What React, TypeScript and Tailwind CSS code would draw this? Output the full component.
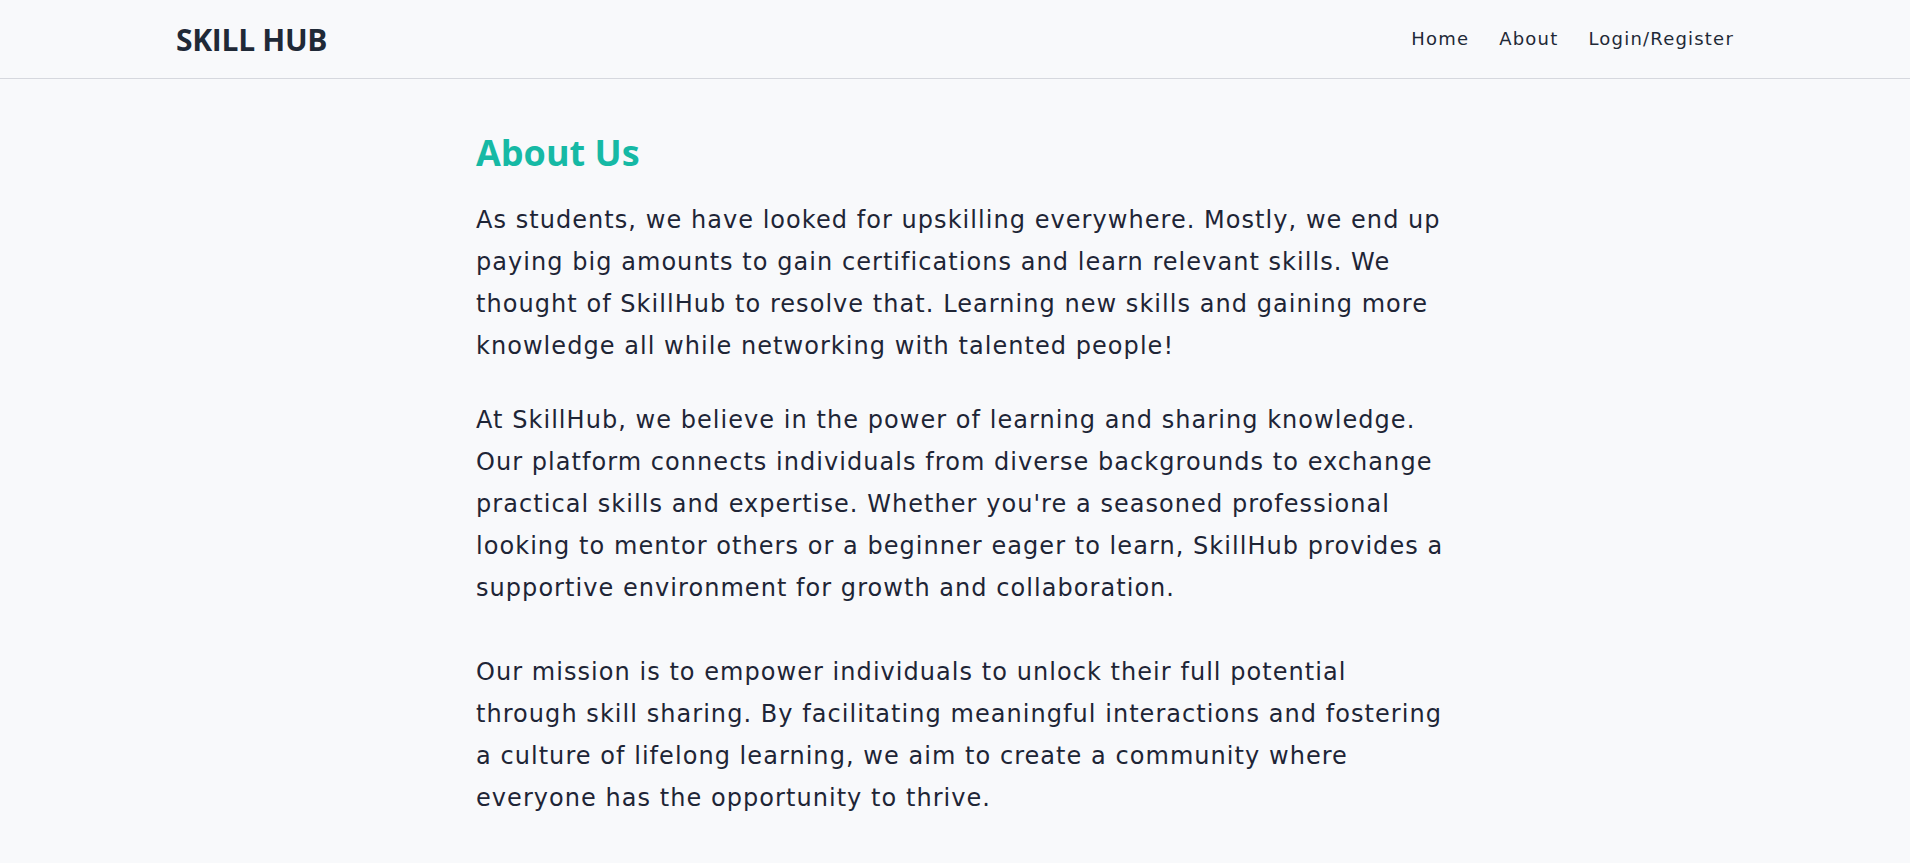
import React from "react";

const navLinks = ["Home", "About", "Login/Register"];

const intro = [
  "As students, we have looked for upskilling everywhere. Mostly, we end up",
  "paying big amounts to gain certifications and learn relevant skills. We",
  "thought of SkillHub to resolve that. Learning new skills and gaining more",
  "knowledge all while networking with talented people!",
];

const belief = [
  "At SkillHub, we believe in the power of learning and sharing knowledge.",
  "Our platform connects individuals from diverse backgrounds to exchange",
  "practical skills and expertise. Whether you're a seasoned professional",
  "looking to mentor others or a beginner eager to learn, SkillHub provides a",
  "supportive environment for growth and collaboration.",
];

const mission = [
  "Our mission is to empower individuals to unlock their full potential",
  "through skill sharing. By facilitating meaningful interactions and fostering",
  "a culture of lifelong learning, we aim to create a community where",
  "everyone has the opportunity to thrive.",
];

function Lines({ lines }: { lines: string[] }) {
  return (
    <>
      {lines.map((line, i) => (
        <React.Fragment key={i}>
          {line}
          {i < lines.length - 1 && <br />}
        </React.Fragment>
      ))}
    </>
  );
}

export default function App() {
  return (
    <div className="min-h-screen bg-[#f8f9fb] text-[#1e2536] font-['Open_Sans',sans-serif]">
      <header className="h-[79px] border-b border-[#d6d8de] flex items-center justify-between px-[176px]">
        <p className="text-[30px] font-bold tracking-[-0.3px] text-[#1f2937]">SKILL HUB</p>
        <nav className="flex items-center gap-[30px] text-[18px] tracking-[1.2px] text-[#1f2937] font-['DejaVu_Sans',sans-serif]">
          {navLinks.map((link) => (
            <a key={link} href="#" className="leading-none">
              {link}
            </a>
          ))}
        </nav>
      </header>

      <main className="pl-[476px] pt-[54px] pb-16">
        <h1 className="text-[36px] leading-[40px] font-bold text-[#16b9a5]">About Us</h1>
        <p className="mt-[26px] text-[24px] leading-[42px] tracking-[1.05px] font-['DejaVu_Sans',sans-serif]">
          <Lines lines={intro} />
        </p>
        <p className="mt-8 text-[24px] leading-[42px] tracking-[1.05px] font-['DejaVu_Sans',sans-serif]">
          <Lines lines={belief} />
          <br />
          <br />
          <Lines lines={mission} />
        </p>
      </main>
    </div>
  );
}
